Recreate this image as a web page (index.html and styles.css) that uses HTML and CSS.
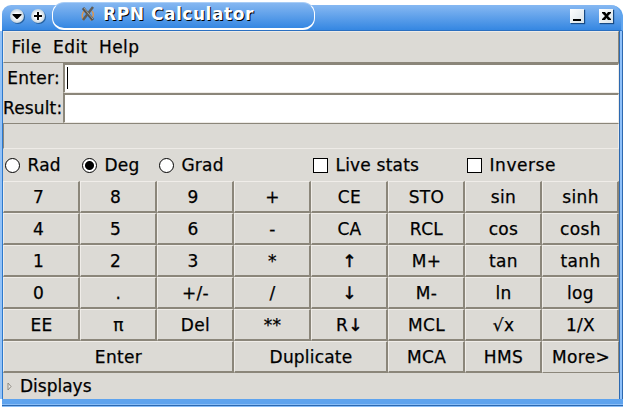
FILE: index.html
```html
<!DOCTYPE html>
<html lang="en">
<head>
<meta charset="utf-8">
<title>RPN Calculator</title>
<link rel="stylesheet" href="styles.css">
</head>
<body>
<div class="window">
  <header class="titlebar">
    <svg class="tool" width="14" height="14" viewBox="0 0 14 14"><use href="#round"/><path d="M2.500 5h9v1L7.500 10h-1l-4-4z"/></svg>
    <svg class="tool plus" width="14" height="14" viewBox="0 0 14 14"><use href="#round"/><path d="M6 3h2v3h3v2H8v3H6V8H3V6h3z"/></svg>
    <div class="tab">
      <svg width="14" height="16" viewBox="0 0 14 16" fill="none"><path d="M4 5C1 6 0 11 3 14M9 14c4-2 4-7 2-9" stroke="#dc9650" stroke-width="1.500"/><path d="M2 2l10 12" stroke="#555" stroke-width="3"/><path d="M12 1L2 14" stroke="#625d56" stroke-width="2.500"/><path d="M3 2l9 11" stroke="#a5a294"/></svg>
      <span>RPN Calculator</span>
    </div>
    <div class="controls">
      <b class="control"><svg width="14" height="14"><path d="M3 10h8v2H3z"/></svg></b>
      <b class="control"><svg width="14" height="14"><path d="M3 3h3l1.500 2L9 3h3v1L9 7l3 3v1H9L7.500 9 6 11H3v-1l3-3-3-3z"/></svg></b>
    </div>
    <svg width="0" height="0"><defs><radialGradient id="g"><stop offset=".4" stop-color="#fff"/><stop offset="1" stop-color="#c2d2de"/></radialGradient><circle id="round" cx="7" cy="7" r="7" fill="url(#g)"/></defs></svg>
  </header>
  <main class="client">
    <nav class="menu"><span>File</span><span>Edit</span><span>Help</span></nav>
    <div class="field"><label class="entry">Enter:</label><div class="input"><i class="caret"></i></div></div>
    <div class="field"><label>Result:</label><div class="input"></div></div>
    <div class="status"></div>
    <div class="options">
      <label><i class="radio"></i>Rad</label>
      <label><i class="radio on"></i>Deg</label>
      <label class="wide"><i class="radio"></i>Grad</label>
      <label class="wide"><i class="check"></i>Live stats</label>
      <label class="wide inverse"><i class="check"></i>Inverse</label>
    </div>
    <div class="keys">
      <b class="digit">7</b><b class="digit">8</b><b class="digit nine">9</b><b>+</b><b>CE</b><b>STO</b><b>sin</b><b>sinh</b>
      <b class="digit">4</b><b class="digit">5</b><b class="digit nine">6</b><b>-</b><b>CA</b><b>RCL</b><b>cos</b><b>cosh</b>
      <b class="digit">1</b><b class="digit">2</b><b class="digit nine">3</b><b>*</b><b class="arrow">↑</b><b>M+</b><b>tan</b><b>tanh</b>
      <b class="digit">0</b><b>.</b><b>+/-</b><b>/</b><b class="arrow">↓</b><b>M-</b><b>ln</b><b>log</b>
      <b>EE</b><b>π</b><b>Del</b><b>**</b><b>R<span class="arrow">↓</span></b><b>MCL</b><b>√x</b><b>1/X</b>
      <b class="enter">Enter</b><b class="duplicate">Duplicate</b><b>MCA</b><b>HMS</b><b class="more">More&gt;</b>
    </div>
    <div class="displays"><svg width="6" height="9" viewBox="0 0 6 9"><path d="M1 1v7l3-3.500z" fill="#eee" stroke="#8c887e"/></svg>Displays</div>
  </main>
  <footer class="bottom"></footer>
</div>
</body>
</html>
```
FILE: styles.css
```css
* { box-sizing: border-box; }
body {
  margin: 0;
  width: 623px;
  height: 407px;
  overflow: hidden;
  background: #fff;
  font: 17px "DejaVu Sans", sans-serif;
  color: #000;
  -webkit-text-stroke: .25px;
}
.window { padding-top: 5px; }
.titlebar {
  height: 26px;
  display: flex;
  padding: 4px 8px 0 8px;
  border-radius: 9px 12px 0 0;
  background: linear-gradient(#86b8f2, #3587e2);
  border-right: 2px solid #5ea4ee;
  border-bottom: 1px solid #2a6fc0;
  margin-left: 2px;
}
.tool { filter: drop-shadow(1px 1px 0 #2460a0); flex: none; }
.plus { margin-left: 7px; }
.tab {
  display: flex;
  align-items: center;
  width: 263px;
  height: 28px;
  margin: -7px 0 0 7px;
  padding: 0 0 3px 28px;
  border: 1.5px solid #fff;
  border-top: 1px solid #a8cdf6;
  border-bottom-width: 2px;
  border-radius: 12px;
  background: linear-gradient(#85b7f1, #3587e2);
  color: #fff;
  font-weight: bold;
  letter-spacing: .55px;
  -webkit-text-stroke: 0;
  text-shadow: 1px 1px 0 #000;
  flex: none;
}
.tab svg { margin-right: 8px; }
.tab span { white-space: nowrap; }
.controls { display: flex; margin-left: auto; margin-right: .5px; gap: 15px; }
.control {
  width: 14px;
  height: 14px;
  background: linear-gradient(135deg, #fff, #d8e2e8);
  box-shadow: 1px 1px 1px #174a84;
}
.control svg { display: block; }
.client {
  height: 368px;
  border-left: 1px solid #2d79cc;
  border-right: 1px solid #2d69b0;
  margin: 0 3px 0 2px;
  background: #dcdad5;
  box-shadow: -2px 0 #93c2f7, 2px 0 #8fc1fa, 3px 0 #2d69b0;
}
.menu {
  display: flex;
  gap: 11.5px;
  height: 32px;
  padding: 1px 0 0 7.5px;
  line-height: 29px;
  letter-spacing: .4px;
  border-top: 1px solid #eeebe7;
  border-left: 1px solid #eeebe7;
  border-right: 1px solid #8b867a;
  border-bottom: 1px solid #8b867a;
}
.field { display: flex; height: 30px; line-height: 31px; }
.field label { width: 60px; padding-right: 1px; text-align: right; white-space: nowrap; letter-spacing: .15px; }
.field .entry { padding-right: 3px; letter-spacing: .3px; }
.input {
  flex: 1;
  background: #fff;
  border: solid #eeebe7;
  border-width: 2px 1px 1px 2px;
  border-top-color: #8b867a;
  border-left-color: #8b867a;
}
.caret { display: block; width: 1px; height: 22px; margin: 2px 0 0 2px; background: #000; }
.status {
  height: 26px;
  border: 1px solid #8b867a;
  border-right-color: #eeebe7;
  border-bottom-color: #eeebe7;
}
.options, .keys { display: grid; grid-template-columns: repeat(8, 77px); }
.options { height: 32px; letter-spacing: .2px; }
.options label { display: flex; align-items: center; padding-left: 2px; white-space: nowrap; }
.wide { grid-column: span 2; }
.inverse { letter-spacing: .55px; }
.radio, .check { width: 15px; height: 15px; margin-right: 7.5px; border: 1px solid #000; background: #fff; flex: none; }
.radio { border-radius: 50%; }
.on { background: radial-gradient(circle, #000 4px, #fff 5px); }
.keys { grid-auto-rows: 32px; }
.keys b {
  font-weight: normal;
  text-align: center;
  line-height: 31px;
  letter-spacing: .35px;
  border: solid #8b867a;
  border-width: 1px 2px 2px 1px;
  border-top-color: #f0ede9;
  border-left-color: #f0ede9;
  padding-left: 1px;
  white-space: nowrap;
}
.keys .digit { padding-right: 6px; }
.keys .nine { padding-right: 5px; }
.keys .arrow { -webkit-text-stroke: .5px; }
.enter { grid-column: span 3; }
.duplicate { grid-column: span 2; }
.keys .duplicate { letter-spacing: .2px; }
.keys .more { border-right-width: 1px; border-bottom-width: 1px; }
.displays { display: flex; align-items: center; gap: 7px; height: 26px; padding-left: 4px; }
.bottom {
  height: 8px;
  margin-left: 2px;
  background: linear-gradient(#5ea3ee 0 5px, #8abef8 5px 6px, #2d69b0 6px 7px, #8abef8 7px);
}
```
